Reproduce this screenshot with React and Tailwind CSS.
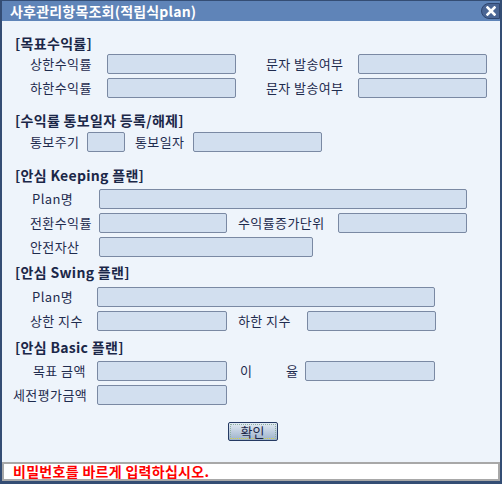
import React from "react";

const font = { fontFamily: '"Noto Sans CJK KR", "Noto Sans", sans-serif' };

function Input({ w }) {
  return <div className={`h-[20px] shrink-0 rounded-[2px] border border-[#7a89a3] bg-[#d2dfef] ${w}`} />;
}

function Label({ children, w, cls = "" }) {
  return <div className={`shrink-0 whitespace-nowrap text-[13px] tracking-[0.4px] leading-[20px] text-[#1e2b4e] ${w} ${cls}`}>{children}</div>;
}

function Heading({ children, mt }) {
  return <div className={`pl-[13px] text-[14px] font-bold tracking-[0.3px] leading-[16px] text-[#1b2748] ${mt}`}>{children}</div>;
}

export default function App() {
  return (
    <div style={font} className="flex h-[484px] w-[502px] flex-col border-b-[3px] border-l-[2px] border-r-[2px] border-t border-[#344d74] bg-[#eef4fb]">
      <div className="flex h-[20px] shrink-0 items-center justify-between bg-[#5f84b8] pl-[8px]">
        <div className="text-[14px] font-bold tracking-[0.2px] leading-[20px] text-white">사후관리항목조회(적립식plan)</div>
        <div className="flex h-[16px] w-[19px] items-center justify-center rounded-l-full border border-[#2f4670] bg-[#4a6594] text-[13px] font-bold leading-none text-white">
          <svg width="10" height="10" viewBox="0 0 10 10"><path d="M1.5 1.5 L8.5 8.5 M8.5 1.5 L1.5 8.5" stroke="white" strokeWidth="2.6" strokeLinecap="square" /></svg>
        </div>
      </div>
      <div className="flex flex-1 flex-col">
        <Heading mt="mt-[14px]">[목표수익률]</Heading>
        <div className="mt-[3px] flex items-center pl-[28px]">
          <Label w="w-[77px]">상한수익률</Label>
          <Input w="w-[129px]" />
          <Label w="w-[92px]" cls="ml-[30px]">문자 발송여부</Label>
          <Input w="w-[129px]" />
        </div>
        <div className="mt-[4px] flex items-center pl-[28px]">
          <Label w="w-[77px]">하한수익률</Label>
          <Input w="w-[129px]" />
          <Label w="w-[92px]" cls="ml-[30px]">문자 발송여부</Label>
          <Input w="w-[129px]" />
        </div>

        <Heading mt="mt-[14px]">[수익률 통보일자 등록/해제]</Heading>
        <div className="mt-[4px] flex items-center pl-[28px]">
          <Label w="w-[57px]">통보주기</Label>
          <Input w="w-[38px]" />
          <Label w="w-[58px]" cls="ml-[10px]">통보일자</Label>
          <Input w="w-[129px]" />
        </div>

        <Heading mt="mt-[15px]">[안심 Keeping 플랜]</Heading>
        <div className="mt-[6px] flex items-center pl-[28px]">
          <Label w="w-[69px]" cls="pl-[2px]">Plan명</Label>
          <Input w="w-[368px]" />
        </div>
        <div className="mt-[4px] flex items-center pl-[28px]">
          <Label w="w-[69px]">전환수익률</Label>
          <Input w="w-[128px]" />
          <Label w="w-[100px]" cls="ml-[11px]">수익률증가단위</Label>
          <Input w="w-[129px]" />
        </div>
        <div className="mt-[4px] flex items-center pl-[28px]">
          <Label w="w-[69px]">안전자산</Label>
          <Input w="w-[214px]" />
        </div>

        <Heading mt="mt-[7px]">[안심 Swing 플랜]</Heading>
        <div className="mt-[7px] flex items-center pl-[28px]">
          <Label w="w-[67px]" cls="pl-[2px]">Plan명</Label>
          <Input w="w-[338px]" />
        </div>
        <div className="mt-[4px] flex items-center pl-[28px]">
          <Label w="w-[67px]">상한 지수</Label>
          <Input w="w-[130px]" />
          <Label w="w-[69px]" cls="ml-[11px]">하한 지수</Label>
          <Input w="w-[129px]" />
        </div>

        <Heading mt="mt-[8px]">[안심 Basic 플랜]</Heading>
        <div className="mt-[6px] flex items-center pl-[28px]">
          <Label w="w-[67px]" cls="pl-[3px]">목표 금액</Label>
          <Input w="w-[130px]" />
          <Label w="w-[46px]" cls="ml-[13px]">이</Label>
          <Label w="w-[19px]">율</Label>
          <Input w="w-[130px]" />
        </div>
        <div className="mt-[4px] flex items-center pl-[11px]">
          <Label w="w-[84px]">세전평가금액</Label>
          <Input w="w-[130px]" />
        </div>

        <div className="mt-[17px] flex justify-center pl-[3px]">
          <button className="h-[19px] w-[50px] rounded-[2px] border border-[#253a63] bg-gradient-to-b from-[#e3ebf4] to-[#9db2cb] p-[1px]">
            <div className="flex h-full w-full items-center justify-center border border-dotted border-[#8fb0a0] border-b-[#d6d24a] text-[13px] leading-none text-[#1b2748]">확인</div>
          </button>
        </div>

        <div className="mt-auto h-[19px] border-2 border-[#a8a8a8] bg-white pl-[9px] text-[14px] font-bold tracking-[0.3px] leading-[15px] text-[#ff0000]">
          비밀번호를 바르게 입력하십시오.
        </div>
      </div>
    </div>
  );
}
